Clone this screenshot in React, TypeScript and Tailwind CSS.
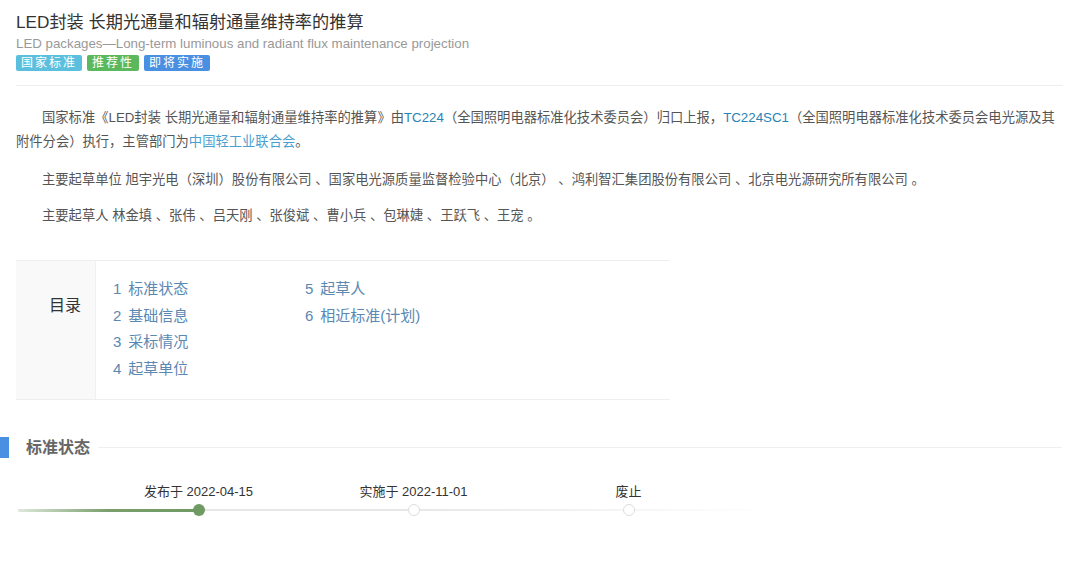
const FONT = {
  fontFamily: '"Liberation Sans", "Noto Sans CJK SC", sans-serif',
};

const badges = [
  { label: "国家标准", color: "bg-[#5bc0de]" },
  { label: "推荐性", color: "bg-[#5cb85c]" },
  { label: "即将实施", color: "bg-[#4a90e2]" },
];

const toc = [
  "标准状态",
  "基础信息",
  "采标情况",
  "起草单位",
  "起草人",
  "相近标准(计划)",
];

const steps = [
  { label: "发布于 2022-04-15", done: true },
  { label: "实施于 2022-11-01", done: false },
  { label: "废止", done: false },
];

function Header() {
  return (
    <div className="border-b border-[#eeeeee] pb-[14px]">
      <h1 className="text-[17.2px] leading-[22px] text-[#333] pt-[11px]">
        LED封装 长期光通量和辐射通量维持率的推算
      </h1>
      <p className="text-[13.3px] leading-[20px] text-[#999] mt-[1px]">
        LED packages—Long-term luminous and radiant flux maintenance projection
      </p>
      <div className="flex gap-[5px] mt-[1px]">
        {badges.map((b) => (
          <span
            key={b.label}
            className={`${b.color} text-white text-[12px] leading-[16px] h-[16px] px-[5px] rounded-[2px] tracking-[2px]`}
          >
            {b.label}
          </span>
        ))}
      </div>
    </div>
  );
}

function Intro() {
  return (
    <div className="text-[13.3px] leading-[24px] text-[#555] pt-[20px]">
      <p className="indent-[26px] mb-[14px]">
        国家标准《LED封装 长期光通量和辐射通量维持率的推算》由
        <span className="text-[#2a83b5]">TC224</span>
        （全国照明电器标准化技术委员会）归口上报，
        <span className="text-[#2a83b5]">TC224SC1</span>
        （全国照明电器标准化技术委员会电光源及其附件分会）执行，主管部门为
        <span className="text-[#4a9fd0]">中国轻工业联合会</span>。
      </p>
      <p className="indent-[26px] mb-[12px]">
        主要起草单位 旭宇光电（深圳）股份有限公司 、国家电光源质量监督检验中心（北京） 、鸿利智汇集团股份有限公司 、北京电光源研究所有限公司 。
      </p>
      <p className="indent-[26px]">
        主要起草人 林金填 、张伟 、吕天刚 、张俊斌 、曹小兵 、包琳婕 、王跃飞 、王宠 。
      </p>
    </div>
  );
}

function Toc() {
  return (
    <div className="mt-[32px] w-[654px] flex border-y border-[#eeeeee] h-[140px]">
      <div className="w-[80px] bg-[#f9f9f9] border-r border-[#f0f0f0] text-right pr-[14px] pt-[33px] text-[16px] leading-[24px] text-[#333]">
        目录
      </div>
      <div className="pl-[17px] pt-[15px] grid grid-flow-col grid-rows-[repeat(4,26.7px)] grid-cols-[192px_192px] content-start">
        {toc.map((t, i) => (
          <div
            key={t}
            className="text-[15px] leading-[26.7px] text-[#5a88b3]"
          >
            <span className="mr-[7px]">{i + 1}</span>
            {t}
          </div>
        ))}
      </div>
    </div>
  );
}

function SectionTitle() {
  return (
    <div className="flex items-center mt-[37px] -ml-4 h-[21px]">
      <div className="w-[9px] h-[21px] bg-[#4a90e2]" />
      <div className="pl-[17px] pr-[8px] text-[16px] font-bold text-[#666]">
        标准状态
      </div>
      <div className="flex-1 h-px bg-[#eeeeee] mr-[1px]" />
    </div>
  );
}

function Timeline() {
  return (
    <div className="relative mt-[24px] w-[752px] ml-[2px] pl-[73px] flex">
      <div className="absolute left-0 right-0 top-[27px] h-[2px] bg-gradient-to-r from-[#e6e6e6] via-[#e6e6e6] to-transparent" />
      <div className="absolute left-0 w-[180px] top-[26.5px] h-[3px] rounded-full bg-gradient-to-r from-[#dfe8dc] via-[#7a9f6c] to-[#6f9a63]" />
      {steps.map((s) => (
        <div key={s.label} className="relative w-[215px] flex flex-col items-center">
          <div className="text-[13px] leading-[20px] text-[#333]">{s.label}</div>
          <div
            className={`mt-[2px] w-[12px] h-[12px] rounded-full ${
              s.done
                ? "bg-[#6f9a63]"
                : "bg-white border border-[#dddddd]"
            }`}
          />
        </div>
      ))}
    </div>
  );
}

export default function App() {
  return (
    <div className="w-[1080px] h-[562px] bg-white overflow-hidden" style={FONT}>
      <div className="pl-4 pr-[17px]">
        <Header />
        <Intro />
        <Toc />
        <SectionTitle />
        <Timeline />
      </div>
    </div>
  );
}
